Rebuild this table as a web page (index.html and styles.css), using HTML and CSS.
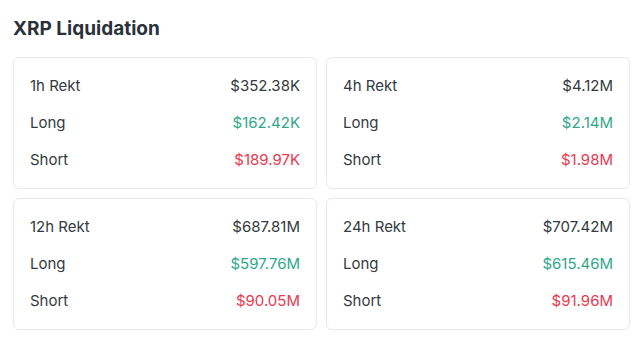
FILE: index.html
```html
<!DOCTYPE html>
<html>
<head>
<meta charset="utf-8">
<link rel="stylesheet" href="styles.css">
</head>
<body>
<section class="panel">
  <h2 class="title">XRP Liquidation</h2>
  <div class="grid">
    <div class="card">
      <div class="row"><span>1h Rekt</span><span>$352.38K</span></div>
      <div class="row"><span>Long</span><span class="up">$162.42K</span></div>
      <div class="row"><span>Short</span><span class="down">$189.97K</span></div>
    </div>
    <div class="card">
      <div class="row"><span>4h Rekt</span><span>$4.12M</span></div>
      <div class="row"><span>Long</span><span class="up">$2.14M</span></div>
      <div class="row"><span>Short</span><span class="down">$1.98M</span></div>
    </div>
    <div class="card">
      <div class="row"><span>12h Rekt</span><span>$687.81M</span></div>
      <div class="row"><span>Long</span><span class="up">$597.76M</span></div>
      <div class="row"><span>Short</span><span class="down">$90.05M</span></div>
    </div>
    <div class="card">
      <div class="row"><span>24h Rekt</span><span>$707.42M</span></div>
      <div class="row"><span>Long</span><span class="up">$615.46M</span></div>
      <div class="row"><span>Short</span><span class="down">$91.96M</span></div>
    </div>
  </div>
</section>
</body>
</html>
```
FILE: styles.css
```css
html, body {
  margin: 0;
  padding: 0;
  background: #ffffff;
}
body {
  font-family: "Inter", "Noto Sans", sans-serif;
  color: #333a41;
}
.panel {
  padding: 16px 3px 0 13px;
}
.title {
  margin: 0 0 15px 0;
  font-size: 19px;
  line-height: 26px;
  font-weight: 700;
  color: #2b3139;
}
.grid {
  display: grid;
  grid-template-columns: 1fr 1fr;
  gap: 9px;
}
.card {
  border: 1px solid #e6e8ea;
  border-radius: 6px;
  padding: 16px 16px;
  display: flex;
  flex-direction: column;
  gap: 13px;
}
.row {
  display: flex;
  justify-content: space-between;
  font-size: 15px;
  line-height: 24px;
}
.up { color: #2fa889; }
.down { color: #e8394f; }
```
